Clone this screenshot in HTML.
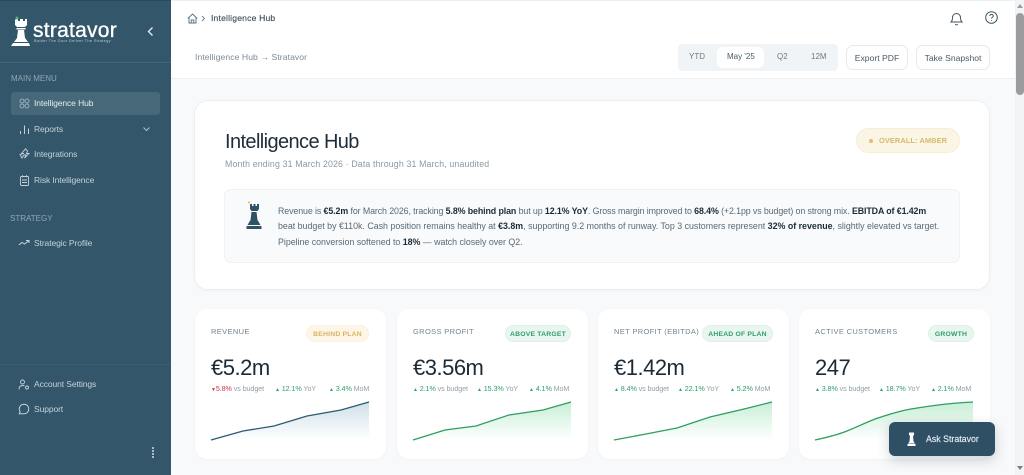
<!DOCTYPE html>
<html><head><meta charset="utf-8">
<style>
*{box-sizing:border-box}
html,body{margin:0;padding:0;width:1024px;height:475px;overflow:hidden;background:#f8f9fa;font-family:"Liberation Sans",sans-serif;color:#1f2d3a}
.t{position:absolute;white-space:nowrap;line-height:1}
.a{position:absolute}
#side{left:0;top:0;width:171px;height:475px;background:#33566a}
.nav{color:#c4d2da;font-size:8.5px;letter-spacing:-.1px}
.sec{color:#90a7b4;font-size:8px;letter-spacing:0}
.card{position:absolute;top:309px;width:191px;height:150px;background:#fff;border-radius:12px;box-shadow:0 1px 3px rgba(0,0,0,.03)}
.lbl{font-size:7.5px;color:#74858f;letter-spacing:.35px;left:16px;top:19px}
.pill{position:absolute;top:16px;height:17px;border-radius:9px;font-size:6.8px;font-weight:bold;line-height:17px;text-align:center;letter-spacing:.2px;white-space:nowrap}
.g{background:#e9f6f0;color:#2f9e6a;border:1px solid #dff0e8}
.y{background:#fdf6e7;color:#d8b266;border:1px solid #faf2e2}
.val{font-size:22px;left:16px;top:48px;color:#1c2a35;letter-spacing:-.5px}
.sub{font-size:7.2px;color:#93a0a9;top:75.500px;letter-spacing:-.1px}
.sub b{font-weight:normal;color:#2f9e6a}
.sub i{font-style:normal;color:#2f9e6a;font-size:5px}
.sum{left:278px;font-size:8.85px;color:#5a6a76}
.sum b{color:#1b2c38}
.btn{position:absolute;top:45px;height:25px;background:#fff;border:1px solid #e6eaed;border-radius:7px;font-size:8.6px;color:#4a5a66;line-height:24px;text-align:center}
svg{position:absolute;overflow:visible}
</style></head><body>

<div class="a" id="side"></div>
<div class="a" style="left:0;top:0;width:171px;height:1px;background:#2b4a5c"></div>
<div class="a" style="left:0;top:62px;width:171px;height:1px;background:#436577"></div>

<!-- logo -->
<svg style="left:10px;top:16px" width="22" height="34" viewBox="0 0 22 34">
<path fill="#fff" d="M6 3h2v2h2V3h3v2h2V3h2v6l-2 2H7L5 9V4z"/><rect x="6.500" y="12" width="9" height="1.500" fill="#fff"/>
<path fill="#fff" d="M8 14h6l1 8 3 4H4l3-4z"/><path fill="#fff" d="M3 27h16l1 3H1z"/>
<circle cx="7" cy="2" r="1.500" fill="#4caf6e"/></svg>
<div class="t" style="left:33px;top:20px;font-size:21px;color:#fff;letter-spacing:.25px;-webkit-text-stroke:.35px #fff">stratavor</div>
<div class="t" style="left:34px;top:39px;font-size:4px;color:#b7c6cf;letter-spacing:.28px">Bolder The Door Deliver The Strategy</div>
<svg style="left:146px;top:26px" width="9" height="11" viewBox="0 0 9 11"><path d="M6.500 1.500 2.500 5.500l4 4" fill="none" stroke="#e3eaee" stroke-width="1.400"/></svg>

<div class="t sec" style="left:11px;top:75px">MAIN MENU</div>
<div class="a" style="left:11px;top:92px;width:149px;height:23px;background:#476878;border-radius:3px"></div>

<svg style="left:19px;top:98px" width="11" height="11" viewBox="0 0 11 11" fill="none" stroke="#a9bcc7" stroke-width=".8"><circle cx="3" cy="3" r="2"/><circle cx="8" cy="3" r="2"/><circle cx="3" cy="8" r="2"/><circle cx="8" cy="8" r="2"/></svg>
<div class="t nav" style="left:34px;top:99px;color:#e4ebef">Intelligence Hub</div>

<svg style="left:19px;top:124px" width="11" height="11" viewBox="0 0 11 11" stroke="#c4d2da" stroke-width="1"><path d="M1.500 10V7M5.500 10V1.500M9.500 10V4.500"/></svg>
<div class="t nav" style="left:34px;top:125px">Reports</div>
<svg style="left:142px;top:126px" width="9" height="7" viewBox="0 0 9 7"><path d="M1.500 1.500 4.500 4.500l3-3" fill="none" stroke="#a9bcc7" stroke-width="1.100"/></svg>

<svg style="left:19px;top:148px" width="11" height="11" viewBox="0 0 11 11" fill="none" stroke="#c4d2da" stroke-width=".9"><path d="M6.500.8 2.500 5.500h2.500L1 6.500l2 3.500 2-3h2l-1.500 3.200L10 5.500H7.500l1-2.500z"/></svg>
<div class="t nav" style="left:34px;top:150px">Integrations</div>

<svg style="left:19px;top:175px" width="11" height="11" viewBox="0 0 11 11" fill="none" stroke="#c4d2da" stroke-width=".9"><rect x="1.500" y="1.500" width="8" height="9" rx="1"/><path d="M3.500.3v2M7.500.3v2M3 5h5M3 7.500h5"/></svg>
<div class="t nav" style="left:34px;top:176px">Risk Intelligence</div>

<div class="t sec" style="left:10px;top:215px">STRATEGY</div>
<svg style="left:18px;top:238px" width="12" height="10" viewBox="0 0 12 10" fill="none" stroke="#c4d2da" stroke-width="1"><path d="M.8 7 4 4.500l2.500 1.500L11 2.500M8 2.500h3V5"/></svg>
<div class="t nav" style="left:34px;top:239px">Strategic Profile</div>

<div class="a" style="left:0;top:364px;width:171px;height:1px;background:#3a5d71"></div>
<svg style="left:18px;top:379px" width="12" height="12" viewBox="0 0 12 12" fill="none" stroke="#c4d2da" stroke-width=".9"><circle cx="4.500" cy="3" r="2"/><path d="M1 10.500c0-3 1.500-4 3.500-4 1 0 1.500.2 2 .5"/><circle cx="9" cy="8.500" r="1.500"/></svg>
<div class="t nav" style="left:34px;top:380px">Account Settings</div>
<svg style="left:18px;top:403px" width="12" height="12" viewBox="0 0 12 12" fill="none" stroke="#d4dfe5" stroke-width=".9"><path d="M6 1.200a4.800 4.800 0 0 1 0 9.600H1.200l1-2A4.800 4.800 0 0 1 6 1.200z"/></svg>
<div class="t nav" style="left:34px;top:405px">Support</div>
<div class="a" style="left:152px;top:447px;width:2px;height:2px;background:#a9bcc7;box-shadow:0 3px 0 #a9bcc7,0 6px 0 #a9bcc7,0 9px 0 #a9bcc7"></div>

<!-- top bars -->
<div class="a" style="left:171px;top:0;width:844px;height:79px;background:#fff;border-bottom:1px solid #eef0f2"></div>
<div class="a" style="left:171px;top:0;width:853px;height:1px;background:#eceff1"></div>
<svg style="left:187px;top:13px" width="11" height="11" viewBox="0 0 11 11" fill="none" stroke="#55707f" stroke-width=".9"><path d="M.8 5.500 5.500 1l4.700 4.500M2 4.500V10h7V4.500M4.200 10V7h2.600v3"/></svg>
<svg style="left:201px;top:15px" width="5" height="7" viewBox="0 0 5 7"><path d="M1 1l2.500 2.500L1 6" fill="none" stroke="#70808b" stroke-width=".9"/></svg>
<div class="t" style="left:211px;top:14px;font-size:8.6px;color:#41525f;letter-spacing:.17px;-webkit-text-stroke:.15px #41525f">Intelligence Hub</div>
<div class="t" style="left:195px;top:53px;font-size:8.6px;color:#7c8a94;letter-spacing:.08px">Intelligence Hub → Stratavor</div>

<svg style="left:950px;top:11px" width="13" height="15" viewBox="0 0 13 15" fill="none" stroke="#3f5563" stroke-width="1"><path d="M1 11c1-1 1.500-2 1.500-4.500a4 4 0 0 1 8 0C10.500 9 11 10 12 11z"/><path d="M5.200 13.300c.6.700 2 .7 2.600 0"/></svg>
<svg style="left:985px;top:11px" width="13" height="13" viewBox="0 0 13 13" fill="none" stroke="#3f5563" stroke-width="1"><circle cx="6.500" cy="6.500" r="5.800"/><path d="M4.800 5c.2-2.200 3.600-2 3.500 0 0 1.200-1.800 1.300-1.800 2.600"/><path d="M6.500 9.200v.8"/></svg>

<div class="a" style="left:678px;top:44px;width:160px;height:27px;background:#f1f4f6;border-radius:4px"></div>
<div class="a" style="left:717px;top:47px;width:47px;height:21px;background:#fff;border-radius:6px"></div>
<div class="t" style="left:689px;top:53px;font-size:8px;color:#6b7b87">YTD</div>
<div class="t" style="left:727px;top:53px;font-size:8px;color:#4a5a66">May '25</div>
<div class="t" style="left:777px;top:53px;font-size:8px;color:#6b7b87">Q2</div>
<div class="t" style="left:811px;top:53px;font-size:8px;color:#6b7b87">12M</div>
<div class="btn" style="left:846px;width:62px">Export PDF</div>
<div class="btn" style="left:916px;width:74px">Take Snapshot</div>

<!-- scrollbar -->
<div class="a" style="left:1015px;top:0;width:9px;height:475px;background:#f3f4f5;border-left:1px solid #f0f1f2"></div>
<div class="a" style="left:1016px;top:13px;width:8px;height:82px;background:#9a9c9e;border-radius:4px"></div>
<svg style="left:1017px;top:4px" width="6" height="4"><path d="M0 4 3 0l3 4z" fill="#9a9c9e"/></svg>
<svg style="left:1017px;top:466px" width="6" height="4"><path d="M0 0 3 4l3-4z" fill="#7c7e80"/></svg>

<!-- hero -->
<div class="a" style="left:194px;top:100px;width:796px;height:190px;background:#fff;border-radius:14px;border:1px solid #eceff1;box-shadow:0 1px 2px rgba(0,0,0,.03)"></div>
<div class="t" style="left:225px;top:132px;font-size:20px;color:#1e2d3a;letter-spacing:-.6px">Intelligence Hub</div>
<div class="t" style="left:225px;top:160px;font-size:8.800px;color:#8b99a3;letter-spacing:.14px">Month ending 31 March 2026 · Data through 31 March, unaudited</div>
<div class="a" style="left:856px;top:128px;width:104px;height:25px;background:#fbf5e6;border-radius:13px;border:1px solid #f8eed8"></div>
<div class="a" style="left:869px;top:139px;width:3.500px;height:3.500px;border-radius:2px;background:#dcbf71"></div>
<div class="t" style="left:879px;top:137px;font-size:7.400px;color:#d8b968;font-weight:bold;letter-spacing:.1px">OVERALL: AMBER</div>

<div class="a" style="left:224px;top:189px;width:736px;height:74px;background:#f8fafb;border-radius:7px;border:1px solid #f0f3f5"></div>
<svg style="left:245px;top:201px" width="18" height="30" viewBox="0 0 18 30"><path fill="#2f5166" d="M5 3h2v2h1.500V3h2v2H12V3h2v5l-1.500 2H6.500L5 8z"/><path fill="#2f5166" d="M6.500 11h5l1 8 3 5H2.500l3-5z"/><path fill="#2f5166" d="M1.500 25h15v3h-15z"/><circle cx="4" cy="1.500" r="1" fill="#d9bf55"/></svg>
<div class="t sum" style="top:206.500px;letter-spacing:-.105px">Revenue is <b>€5.2m</b> for March 2026, tracking <b>5.8% behind plan</b> but up <b>12.1% YoY</b>. Gross margin improved to <b>68.4%</b> (+2.1pp vs budget) on strong mix. <b>EBITDA of €1.42m</b></div>
<div class="t sum" style="top:222px;letter-spacing:0">beat budget by €110k. Cash position remains healthy at <b>€3.8m</b>, supporting 9.2 months of runway. Top 3 customers represent <b>32% of revenue</b>, slightly elevated vs target.</div>
<div class="t sum" style="top:238px;letter-spacing:-.02px">Pipeline conversion softened to <b>18%</b> — watch closely over Q2.</div>

<!-- cards -->
<div class="card" style="left:195px">
 <div class="t lbl">REVENUE</div>
 <div class="pill y" style="left:111px;width:63px">BEHIND PLAN</div>
 <div class="t val">€5.2m</div>
 <div class="t sub" style="left:16px"><i style="color:#d0334e">▼</i><b style="color:#d0334e">5.8%</b> vs budget</div>
 <div class="t sub" style="left:80px"><i>▲</i> <b>12.1%</b> YoY</div>
 <div class="t sub" style="left:134px"><i>▲</i> <b>3.4%</b> MoM</div>
 <svg style="left:0;top:0" width="191" height="150"><defs><linearGradient id="b" x1="0" y1="0" x2="0" y2="1"><stop offset="0" stop-color="#cfe0e9"/><stop offset="1" stop-color="#fff"/></linearGradient></defs>
 <path d="M16 131 48 122 79 117 112 107 146 101 174 93V131z" fill="url(#b)"/><path d="M16 131 48 122 79 117 112 107 146 101 174 93" fill="none" stroke="#2b5a73" stroke-width="1.300"/></svg>
</div>
<div class="card" style="left:397px">
 <div class="t lbl">GROSS PROFIT</div>
 <div class="pill g" style="left:108px;width:66px">ABOVE TARGET</div>
 <div class="t val">€3.56m</div>
 <div class="t sub" style="left:16px"><i>▲</i> <b>2.1%</b> vs budget</div>
 <div class="t sub" style="left:80px"><i>▲</i> <b>15.3%</b> YoY</div>
 <div class="t sub" style="left:132px"><i>▲</i> <b>4.1%</b> MoM</div>
 <svg style="left:0;top:0" width="191" height="150"><defs><linearGradient id="c" x1="0" y1="0" x2="0" y2="1"><stop offset="0" stop-color="#c8eed6"/><stop offset="1" stop-color="#fff"/></linearGradient></defs>
 <path d="M16 131 48 121 79 117 112 106 146 101 174 93V131z" fill="url(#c)"/><path d="M16 131 48 121 79 117 112 106 146 101 174 93" fill="none" stroke="#2f9e5f" stroke-width="1.300"/></svg>
</div>
<div class="card" style="left:598px">
 <div class="t lbl">NET PROFIT (EBITDA)</div>
 <div class="pill g" style="left:104px;width:71px">AHEAD OF PLAN</div>
 <div class="t val">€1.42m</div>
 <div class="t sub" style="left:16px"><i>▲</i> <b>8.4%</b> vs budget</div>
 <div class="t sub" style="left:80px"><i>▲</i> <b>22.1%</b> YoY</div>
 <div class="t sub" style="left:132px"><i>▲</i> <b>5.2%</b> MoM</div>
 <svg style="left:0;top:0" width="191" height="150"><path d="M16 131 48 125 79 119 112 108 146 100 174 93V131z" fill="url(#c)"/><path d="M16 131 48 125 79 119 112 108 146 100 174 93" fill="none" stroke="#2f9e5f" stroke-width="1.300"/></svg>
</div>
<div class="card" style="left:799px">
 <div class="t lbl">ACTIVE CUSTOMERS</div>
 <div class="pill g" style="left:129px;width:46px">GROWTH</div>
 <div class="t val">247</div>
 <div class="t sub" style="left:16px"><i>▲</i> <b>3.8%</b> vs budget</div>
 <div class="t sub" style="left:80px"><i>▲</i> <b>18.7%</b> YoY</div>
 <div class="t sub" style="left:132px"><i>▲</i> <b>2.1%</b> MoM</div>
 <svg style="left:0;top:0" width="191" height="150"><path d="M16 131C30 128 38 126 48 122S70 112 79 109 100 102 112 100 150 94 174 93V131z" fill="url(#c)"/><path d="M16 131C30 128 38 126 48 122S70 112 79 109 100 102 112 100 150 94 174 93" fill="none" stroke="#2f9e5f" stroke-width="1.300"/></svg>
</div>

<!-- floating -->
<div class="a" style="left:889px;top:422px;width:106px;height:34px;background:#2f5064;border-radius:6px;box-shadow:0 4px 12px rgba(30,60,80,.22)"></div>
<svg style="left:906px;top:432px" width="11" height="15" viewBox="0 0 11 15"><path fill="#fff" d="M3 .5h5v3H7l.5 6 1.500 2H2l1.500-2 .5-6H3zM1.500 12h8v2h-8z"/></svg>
<div class="t" style="left:926px;top:435px;font-size:8.800px;color:#e6edf1;-webkit-text-stroke:.15px #e6edf1">Ask Stratavor</div>
</body></html>
